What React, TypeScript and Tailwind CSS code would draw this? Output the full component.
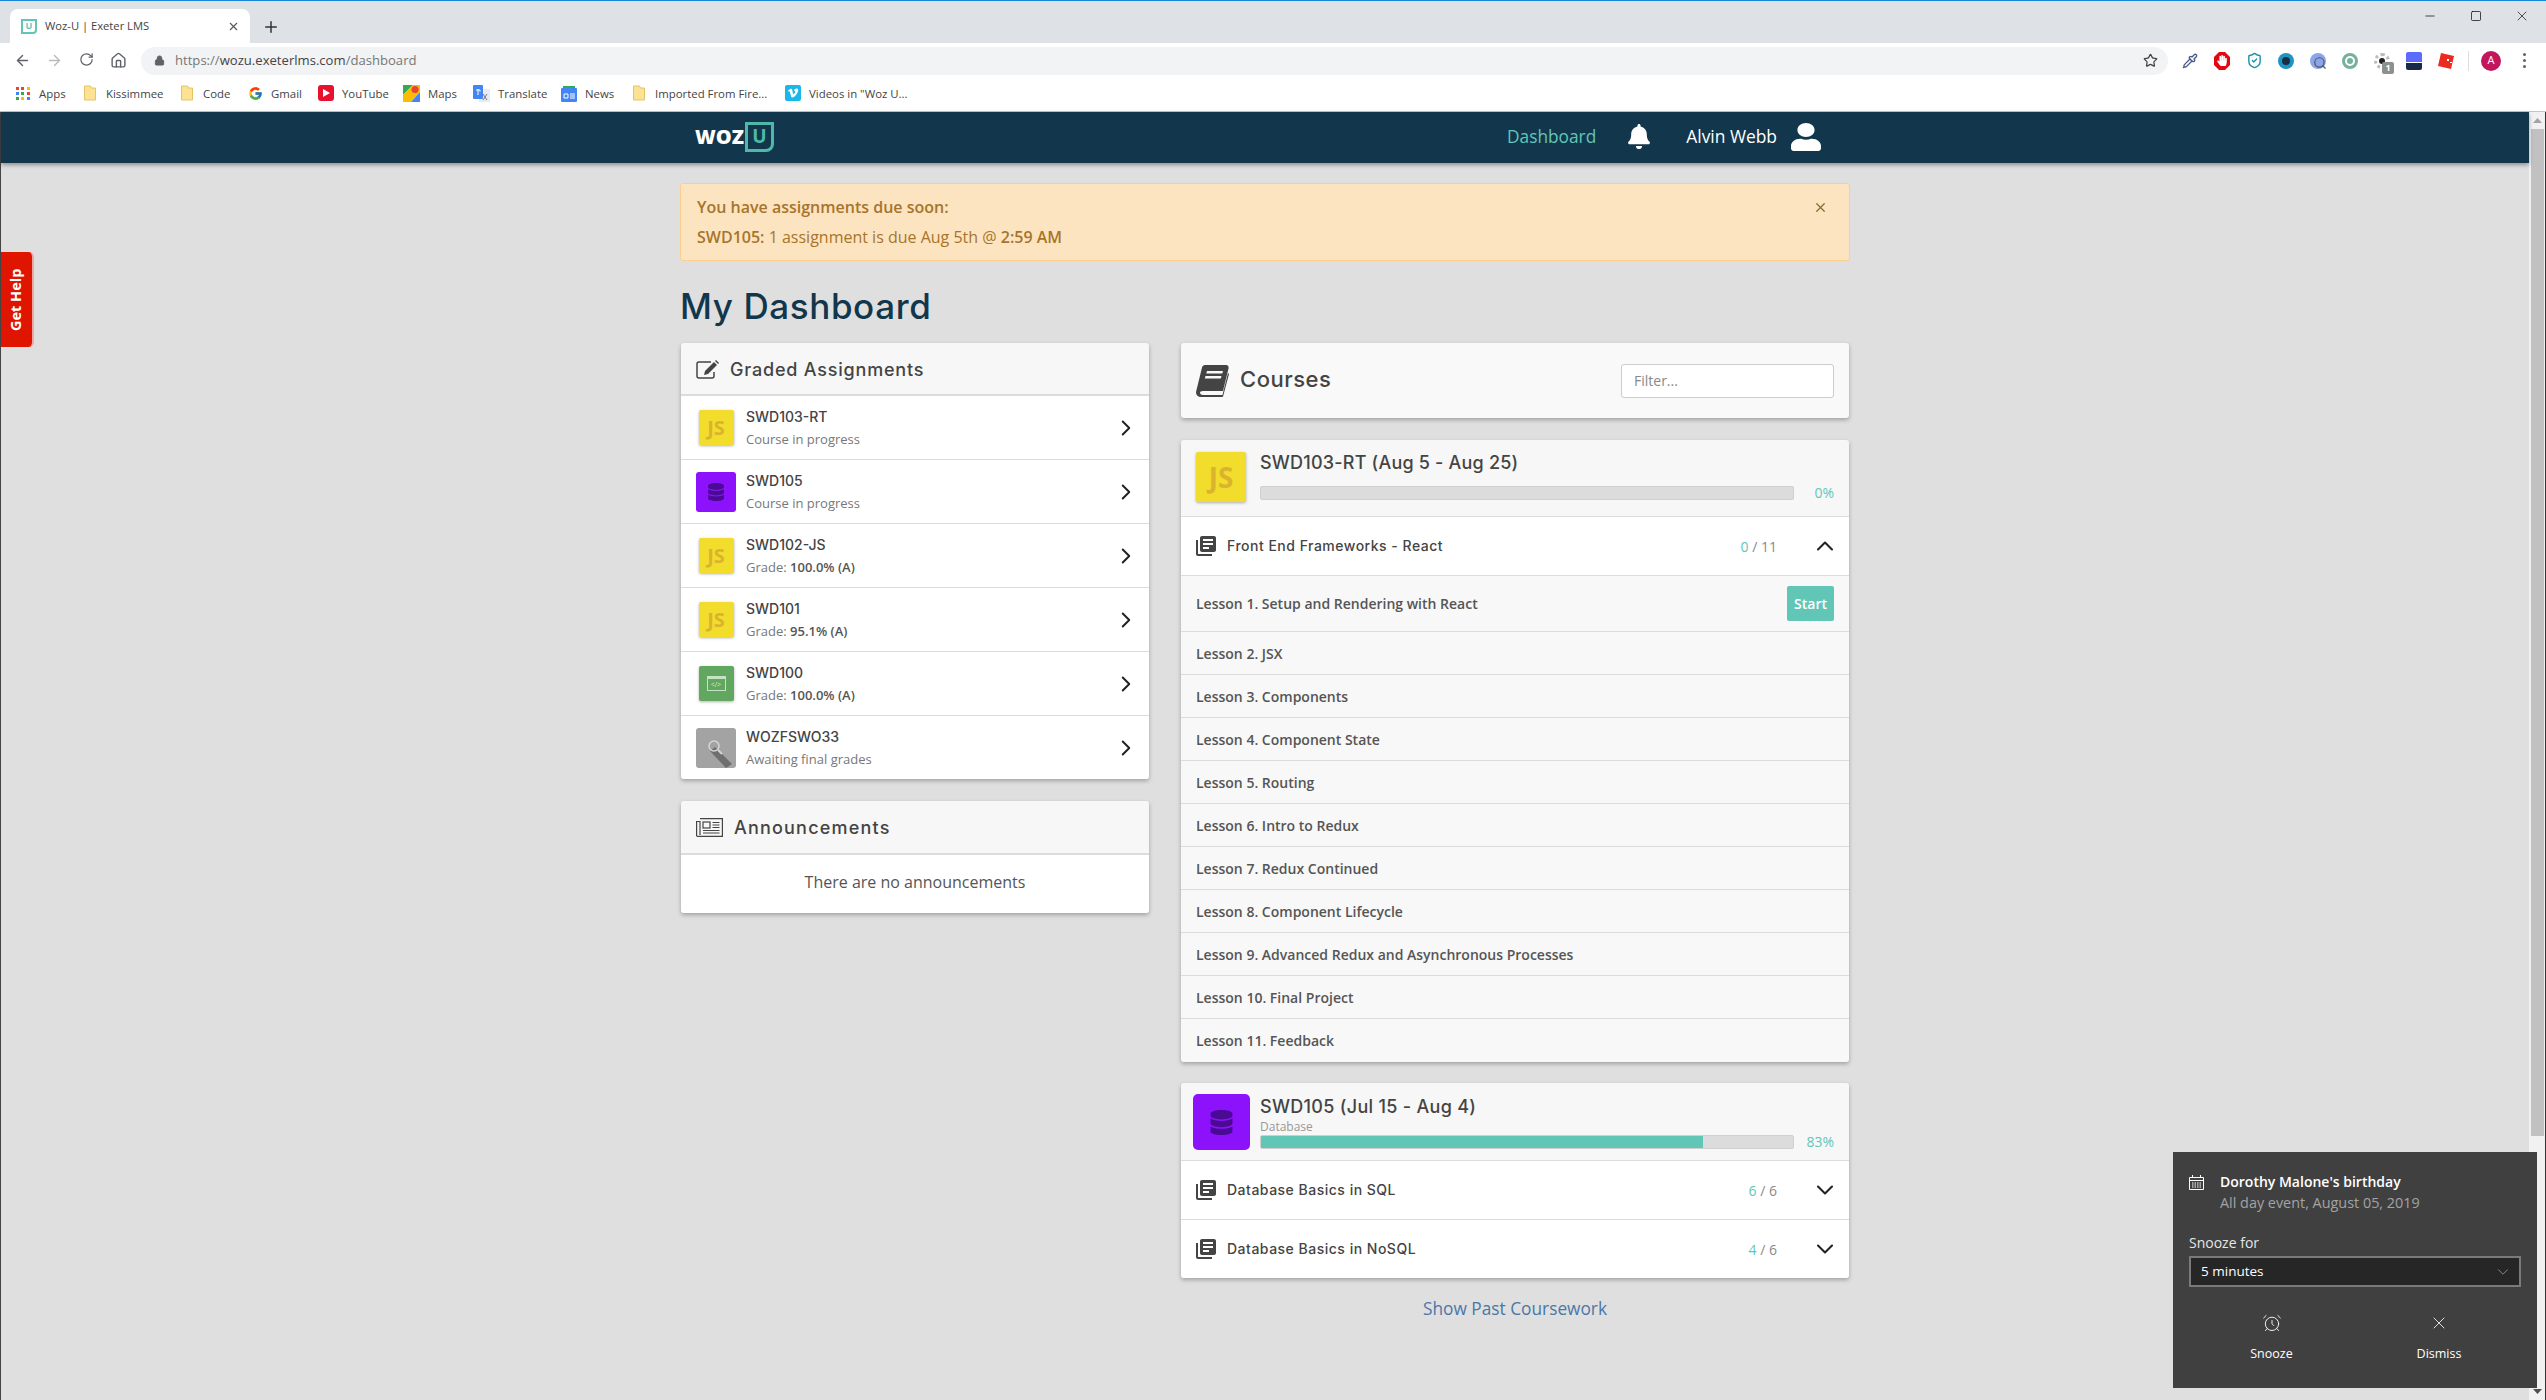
import React from 'react';
import { ArrowLeft, ArrowRight, RotateCw, Home, Star, ChevronRight, ChevronUp, ChevronDown, X, Plus, Minus, Square, Lock, AlarmClock, Pipette, ShieldCheck, Search } from 'lucide-react';
import { FaBell, FaUser, FaDatabase, FaVimeoV, FaHandPaper } from 'react-icons/fa';
import { FcGoogle } from 'react-icons/fc';
import { MdLibraryBooks } from 'react-icons/md';

const sans = 'font-["Open_Sans",sans-serif]';
const head = 'font-["Inter",sans-serif]';
const cardShadow = 'shadow-[0_2px_4px_rgba(0,0,0,0.28)]';

// --- browser chrome bits ---

const Folder = () => (
  <svg width="12" height="16" viewBox="0 0 12 16"><path d="M.5 1h6l1 2h4v12H.5z" fill="#fde293" stroke="#e6c368" /></svg>
);

const AppsGrid = () => (
  <div className="grid grid-cols-3 gap-[2px] w-[14px]">
    {['bg-[#ea4335]', 'bg-[#ea4335]', 'bg-[#fbbc05]', 'bg-[#4285f4]', 'bg-[#34a853]', 'bg-[#ea4335]', 'bg-[#34a853]', 'bg-[#fbbc05]', 'bg-[#4285f4]'].map((c, i) => (
      <span key={i} className={`w-[3px] h-[3px] ${c}`} />
    ))}
  </div>
);

const YouTubeIcon = () => (
  <span className="w-4 h-4 rounded-[3px] bg-[#e8112d] flex items-center justify-center">
    <svg width="7" height="8" viewBox="0 0 7 8"><path d="M0 0l7 4-7 4z" fill="#fff" /></svg>
  </span>
);

const MapsIcon = () => (
  <svg width="17" height="17" viewBox="0 0 17 17">
    <path d="M0 0h10L0 10z" fill="#34a853" />
    <path d="M10 0h7v7L8 17H0v-7z" fill="#fbbc05" />
    <path d="M17 7v10H8z" fill="#4285f4" />
    <circle cx="12" cy="4.5" r="3.5" fill="#ea4335" />
  </svg>
);

const TranslateIcon = () => (
  <svg width="17" height="17" viewBox="0 0 17 17">
    <rect x="6" y="4" width="11" height="13" fill="#e8eaf6" />
    <rect width="10" height="14" rx="1" fill="#4285f4" />
    <path d="M3 5h4v1.5M5 4v6" stroke="#fff" fill="none" />
    <path d="M10 9l4 6M14 9l-4 6" stroke="#777" />
  </svg>
);

const NewsIcon = () => (
  <svg width="16" height="17" viewBox="0 0 16 17">
    <rect y="3" width="16" height="14" rx="1" fill="#4285f4" />
    <path d="M2 3V1h12v2" fill="#34a853" />
    <path d="M3 9h4v4H3zM9 9h5M9 11h5M9 13h5" stroke="#fff" fill="none" />
  </svg>
);

const VimeoIcon = () => (
  <span className="w-4 h-4 rounded-[2px] bg-[#1ab7ea] flex items-center justify-center">
    <FaVimeoV className="w-3 h-3 text-white" />
  </span>
);

const bookmarks = [
  { icon: <AppsGrid />, label: 'Apps', w: 'w-[68px]', ml: 'ml-4', text: 'ml-[9px]' },
  { icon: <Folder />, label: 'Kissimmee', w: 'w-[97px]', ml: '', text: 'ml-[10px]' },
  { icon: <Folder />, label: 'Code', w: 'w-[67px]', ml: '', text: 'ml-[10px]' },
  { icon: <FcGoogle className="w-[15px] h-[15px]" />, label: 'Gmail', w: 'w-[70px]', ml: '', text: 'ml-2' },
  { icon: <YouTubeIcon />, label: 'YouTube', w: 'w-[85px]', ml: '', text: 'ml-2' },
  { icon: <MapsIcon />, label: 'Maps', w: 'w-[70px]', ml: '', text: 'ml-2' },
  { icon: <TranslateIcon />, label: 'Translate', w: 'w-[88px]', ml: '', text: 'ml-2' },
  { icon: <NewsIcon />, label: 'News', w: 'w-[72px]', ml: '', text: 'ml-2' },
  { icon: <Folder />, label: 'Imported From Fire...', w: 'w-[152px]', ml: '', text: 'ml-[10px]' },
  { icon: <VimeoIcon />, label: 'Videos in "Woz U...', w: 'w-[130px]', ml: '', text: 'ml-2' },
];

const extensions = [
  <Pipette key="a" className="w-4 h-4 text-[#4a5a8a]" />,
  <span key="b" className="relative w-4 h-[18px] flex items-center justify-center">
    <svg className="absolute inset-0" width="16" height="18" viewBox="0 0 16 18"><path d="M5 0h6l5 5v8l-5 5H5l-5-5V5z" fill="#e30613" /></svg>
    <FaHandPaper className="relative w-[10px] h-[11px] text-white" />
  </span>,
  <ShieldCheck key="c" className="w-[17px] h-[17px] text-[#1c93ab]" />,
  <span key="d" className="w-4 h-4 rounded-full bg-[#1e93c4] flex items-center justify-center"><span className="w-2 h-2 rounded-full bg-[#16303f]" /></span>,
  <span key="e" className="relative w-4 h-4 rounded-full bg-[#8aa4ee]"><Search className="absolute left-[3px] top-[3px] w-[14px] h-[14px] text-[#555]" /></span>,
  <span key="f" className="w-4 h-4 rounded-full border-[3px] border-[#74b29b] flex items-center justify-center"><span className="w-[6px] h-[6px] rounded-full bg-[#74b29b]" /></span>,
  <span key="g" className="relative w-4 h-4 rounded-full border-[3px] border-dotted border-[#bbb] flex items-center justify-center">
    <span className="w-[6px] h-[6px] rounded-full bg-[#222]" />
    <span className={`absolute left-[5px] top-[6px] w-3 h-3 rounded-[2px] bg-[#8f8f8f] text-white text-[9px] leading-3 text-center font-bold ${sans}`}>1</span>
  </span>,
  <span key="h" className="w-4 h-[18px] rounded-[2px] overflow-hidden flex flex-col"><span className="h-[10px] bg-[#5d6bfa]" /><span className="h-px bg-white" /><span className="flex-1 bg-[#1b2a4a]" /></span>,
  <svg key="i" width="16" height="16" viewBox="0 0 16 16"><path d="M3 0l13 3-3 13L0 13z" fill="#ec2b20" /><path d="M9 6h2v2H9zM12 9h2v1h-2z" fill="#fff" /></svg>,
];

const ChromeBar = () => (
  <div className="shrink-0">
    <div className="h-px bg-[#1a86d6]" />
    <div className="h-[42px] bg-[#dee1e6] flex">
      <div className="ml-[10px] mt-2 w-[240px] h-[34px] bg-white rounded-t-lg flex items-center">
        <span className={`ml-[11px] w-4 h-[15px] border-2 border-[#62c6b7] rounded-br-sm flex items-center justify-center text-[9px] font-bold text-[#62c6b7] ${sans}`}>U</span>
        <span className={`ml-2 text-[11.2px] text-[#444] ${sans}`}>Woz-U | Exeter LMS</span>
        <X className="ml-auto mr-[10px] w-[13px] h-[13px] text-[#555]" />
      </div>
      <Plus className="ml-3 mt-[17px] w-[18px] h-[18px] text-[#333]" />
      <div className="ml-auto flex h-[30px]">
        <span className="w-[46px] flex items-center justify-center"><Minus className="w-[14px] h-[14px] text-black" strokeWidth={1.2} /></span>
        <span className="w-[46px] flex items-center justify-center"><Square className="w-[12px] h-[12px] text-black" strokeWidth={1.4} /></span>
        <span className="w-[46px] flex items-center justify-center"><X className="w-4 h-4 text-black" strokeWidth={1} /></span>
        <span className="w-[1px]" />
      </div>
    </div>
    <div className="h-[35px] bg-white flex items-center">
      <div className="ml-[6px] flex">
        <span className="w-8 flex justify-center"><ArrowLeft className="w-[17px] h-[17px] text-[#5f6368]" /></span>
        <span className="w-8 flex justify-center"><ArrowRight className="w-[17px] h-[17px] text-[#bbb]" /></span>
        <span className="w-8 flex justify-center"><RotateCw className="w-[15px] h-[15px] text-[#5f6368]" /></span>
        <span className="w-8 flex justify-center"><Home className="w-[17px] h-[17px] text-[#5f6368]" /></span>
      </div>
      <div className="ml-[7px] w-[2027px] h-7 rounded-full bg-[#f1f3f4] flex items-center">
        <Lock className="ml-[13px] w-[11px] h-[11px] text-[#5f6368]" fill="#5f6368" />
        <span className={`ml-[10px] text-[13.1px] text-[#777] ${sans}`}>
          https://<span className="text-[#444]">wozu.exeterlms.com</span>/dashboard
        </span>
        <Star className="ml-auto mr-[10px] w-[15px] h-[15px] text-[#444]" />
      </div>
      <div className="ml-[6px] flex items-center">
        {extensions.map((e, i) => (
          <span key={i} className="w-8 flex justify-center items-center">{e}</span>
        ))}
        <span className="ml-[6px] w-px h-5 bg-[#ddd]" />
        <span className={`ml-[12px] w-5 h-5 rounded-full bg-[#c2185b] text-white text-[11px] flex items-center justify-center ${sans}`}>A</span>
        <span className="ml-[22px] flex flex-col gap-[3px]">
          <span className="w-[3px] h-[3px] rounded-full bg-[#5f6368]" />
          <span className="w-[3px] h-[3px] rounded-full bg-[#5f6368]" />
          <span className="w-[3px] h-[3px] rounded-full bg-[#5f6368]" />
        </span>
      </div>
    </div>
    <div className="h-[34px] pb-[2px] bg-white border-b border-[#c4c4c4] flex items-center">
      {bookmarks.map((b) => (
        <div key={b.label} className={`flex items-center ${b.w} ${b.ml}`}>
          {b.icon}
          <span className={`whitespace-nowrap text-[11.4px] text-[#444] ${b.text} ${sans}`}>{b.label}</span>
        </div>
      ))}
    </div>
  </div>
);

// --- card header drawings ---

const EditIcon = () => (
  <svg width="24" height="19" viewBox="0 0 24 19" fill="none">
    <path d="M15 2H3a2 2 0 0 0-2 2v12a2 2 0 0 0 2 2h13a2 2 0 0 0 2-2v-4" stroke="#444" strokeWidth="1.5" />
    <path d="M9 11l9-9 3 3-9 9-4 1z" fill="#444" />
    <path d="M19 1l1-1 3 3-1 1z" fill="#444" />
  </svg>
);

const NewspaperIcon = () => (
  <svg width="27" height="19" viewBox="0 0 27 19" fill="none" stroke="#444" strokeWidth="1.2">
    <path d="M4 .6h22.4v17.8H1.6A1 1 0 0 1 .6 17.4V3.5H4V17" />
    <rect x="7" y="4" width="7" height="6" />
    <path d="M16.5 4.5h7M16.5 7h7M16.5 9.5h7M7 12.5h16.5M7 15h16.5" />
  </svg>
);

const BookIcon = () => (
  <svg width="33" height="32" viewBox="0 0 33 32" fill="#444">
    <path d="M9 0h21c2 0 3 1.5 2.500 3.500L27 26H7c-2 0-3 .8-3 1.800S5 30 7 30h19.500l5.500-22 1 1-5.800 22c-.2.700-.8 1-1.500 1H5c-3 0-5-2-5-4.500 0-.8.200-1.500.500-2.500L6 2.500C6.400 1 7.500 0 9 0z" />
    <path d="M11 6h16l-.7 2.500h-16zM9.500 11h16l-.7 2.500h-16z" fill="#f9f9f9" />
  </svg>
);

// --- course tiles ---

const JsTile = ({ big }: { big?: boolean }) => (
  <div className={`shrink-0 bg-[#f2dc2c] flex items-center justify-center font-bold text-[#dab42c] shadow-[0_1px_3px_rgba(0,0,0,0.3)] ${sans} ${big ? 'w-[50px] h-[50px] text-[28px] rounded-[2px]' : 'w-[35px] h-[35px] text-[20px] rounded-[2px]'}`}>
    JS
  </div>
);

const DbTile = ({ big }: { big?: boolean }) => (
  <div className={`shrink-0 bg-[#8b12fb] rounded-[3px] flex items-center justify-center ${big ? 'w-[57px] h-[56px] rounded-[5px]' : 'w-10 h-10'}`}>
    <FaDatabase className={`text-[#4a0a94] ${big ? 'w-[23px] h-[25px]' : 'w-4 h-[18px]'}`} />
  </div>
);

const CodeTile = () => (
  <div className="shrink-0 w-[35px] h-[35px] rounded-[2px] bg-[#62a75f] shadow-[0_1px_3px_rgba(0,0,0,0.3)] flex items-center justify-center">
    <div className={`w-[19px] h-[15px] border border-[#c6e2c4] border-t-[3px] flex items-center justify-center text-[7px] leading-none text-[#d5ebd3] ${sans}`}>&lt;/&gt;</div>
  </div>
);

const SearchTile = () => (
  <div className="shrink-0 w-10 h-10 rounded-[3px] bg-[#a3a3a3] overflow-hidden flex items-center justify-center">
    <svg width="40" height="40" viewBox="0 0 40 40" fill="none">
      <path d="M19 19L36 36l-6 4-16-17z" fill="#6f6f6f" />
      <circle cx="18" cy="18" r="5" stroke="#d5d5d5" strokeWidth="1.5" />
      <path d="M22 22l4 4" stroke="#d5d5d5" strokeWidth="2" />
    </svg>
  </div>
);

const assignments = [
  { name: 'SWD103-RT', tile: <JsTile />, sub: 'Course in progress' },
  { name: 'SWD105', tile: <DbTile />, sub: 'Course in progress' },
  { name: 'SWD102-JS', tile: <JsTile />, grade: '100.0% (A)' },
  { name: 'SWD101', tile: <JsTile />, grade: '95.1% (A)' },
  { name: 'SWD100', tile: <CodeTile />, grade: '100.0% (A)' },
  { name: 'WOZFSWO33', tile: <SearchTile />, sub: 'Awaiting final grades' },
];

const lessons = [
  'Lesson 2. JSX',
  'Lesson 3. Components',
  'Lesson 4. Component State',
  'Lesson 5. Routing',
  'Lesson 6. Intro to Redux',
  'Lesson 7. Redux Continued',
  'Lesson 8. Component Lifecycle',
  'Lesson 9. Advanced Redux and Asynchronous Processes',
  'Lesson 10. Final Project',
  'Lesson 11. Feedback',
];

const ProgressBar = ({ pct }: { pct: number }) => (
  <div className="w-[534px] h-[14px] rounded-[2px] bg-[#dcdcdc] border border-[#cfcfcf] overflow-hidden">
    <div className="h-full bg-[#62c6b7]" style={{ width: `${pct}%` }} />
  </div>
);

const SectionRow = ({ title, done, total, open, last }: { title: string; done: number; total: number; open?: boolean; last?: boolean }) => (
  <div className={`bg-white flex items-center pl-[15px] pr-[10px] ${last ? 'h-[58px]' : 'h-[59px] border-b border-[#dcdcdc]'}`}>
    <MdLibraryBooks className="w-6 h-6 -ml-[2px] text-[#444]" />
    <span className={`ml-[9px] mb-[2px] text-[14px] tracking-[0.5px] font-medium text-[#444] ${head}`}>{title}</span>
    <span className={`ml-auto text-[14px] text-[#8a8a8a] ${sans}`}>
      <span className="text-[#62c6b7]">{done}</span> / {total}
    </span>
    {open ? (
      <ChevronUp className="ml-[34px] w-[28px] h-[28px] text-[#222]" strokeWidth={1.8} />
    ) : (
      <ChevronDown className="ml-[34px] w-[28px] h-[28px] text-[#222]" strokeWidth={1.8} />
    )}
  </div>
);

// --- page ---

const Nav = () => (
  <div className="relative h-[51px] bg-[#12374c] shadow-[0_2px_4px_rgba(0,0,0,0.35)]">
    <div className="w-[1170px] mx-auto h-full flex items-center pb-[2px] pr-[29px]">
      <span className={`ml-[15px] text-[20px] leading-none font-extrabold text-white ${sans}`}>WOZ</span>
      <span className={`ml-[1px] w-[29px] h-[30px] border-[3px] border-[#4fb9a9] rounded-br-[8px] flex items-center justify-center text-[19px] leading-none font-bold text-[#4fb9a9] ${sans}`}>U</span>
      <span className={`ml-auto text-[17.3px] text-[#62c6b7] ${sans}`}>Dashboard</span>
      <FaBell className="ml-[32px] w-[22px] h-[25px] text-white" />
      <span className={`ml-[36px] text-[17.4px] text-white ${sans}`}>Alvin Webb</span>
      <FaUser className="ml-[14px] w-[30px] h-[28px] text-white" preserveAspectRatio="none" />
    </div>
  </div>
);

const Alert = () => (
  <div className={`mt-5 h-[78px] rounded-[3px] bg-[#fce4c0] border border-[#fbd08e] pl-4 pr-4 text-[16px] text-[#a7742c] relative flex flex-col justify-center gap-[9px] ${sans}`}>
    <div className="font-semibold leading-[21px]">You have assignments due soon:</div>
    <div className="leading-[21px]"><span className="font-semibold">SWD105:</span> 1 assignment is due Aug 5th @ <span className="font-semibold">2:59 AM</span></div>
    <X className="absolute right-[21px] top-[16px] w-[15px] h-[15px] text-[#8a6a30]" />
  </div>
);

const AssignmentsCard = () => (
  <div className={`rounded-[3px] overflow-hidden ${cardShadow}`}>
    <div className="h-[53px] pt-[1px] bg-[#f7f7f7] border-b-2 border-[#dcdcdc] flex items-center pl-[15px]">
      <EditIcon />
      <span className={`ml-[10px] text-[18px] tracking-[0.8px] font-medium text-[#444] ${head}`}>Graded Assignments</span>
    </div>
    {assignments.map((a, i) => (
      <div key={a.name} className={`bg-white flex items-center ${i < assignments.length - 1 ? 'h-16 border-b border-[#dcdcdc]' : 'h-[63px]'}`}>
        <div className="w-[65px] flex justify-center pl-[5px]">{a.tile}</div>
        <div>
          <div className={`text-[14px] leading-[18px] font-medium text-[#444] ${head}`}>{a.name}</div>
          <div className={`mt-1 text-[13px] leading-[18px] text-[#777] ${sans}`}>
            {a.sub ?? (
              <>
                Grade: <span className="font-semibold text-[#555]">{a.grade}</span>
              </>
            )}
          </div>
        </div>
        <ChevronRight className="ml-auto mr-[10px] w-[26px] h-[26px] text-[#222]" strokeWidth={1.8} />
      </div>
    ))}
  </div>
);

const AnnouncementsCard = () => (
  <div className={`mt-[22px] rounded-[3px] overflow-hidden ${cardShadow}`}>
    <div className="h-[54px] bg-[#f7f7f7] border-b-2 border-[#dcdcdc] flex items-center pl-[15px]">
      <NewspaperIcon />
      <span className={`ml-[11px] text-[18px] tracking-[1.2px] font-medium text-[#444] ${head}`}>Announcements</span>
    </div>
    <div className={`h-[58px] pb-1 bg-white flex items-center justify-center text-[16px] text-[#555] ${sans}`}>
      There are no announcements
    </div>
  </div>
);

const CoursesHeader = () => (
  <div className={`h-[75px] rounded-[3px] bg-[#f9f9f9] flex items-center pl-[15px] pr-[15px] ${cardShadow}`}>
    <BookIcon />
    <span className={`ml-[11px] mb-[2px] text-[22px] tracking-[0.5px] font-medium text-[#444] ${head}`}>Courses</span>
    <div className={`ml-auto w-[213px] h-[34px] bg-white border border-[#ccc] rounded-[3px] pl-3 flex items-center text-[14px] text-[#888] ${sans}`}>Filter...</div>
  </div>
);

const CourseReact = () => (
  <div className={`mt-[22px] rounded-[3px] overflow-hidden ${cardShadow}`}>
    <div className="h-[77px] bg-[#f7f7f7] border-b border-[#dcdcdc] flex pl-[15px] pr-[15px] pt-3">
      <JsTile big />
      <div className="ml-[14px] flex-1">
        <div className={`text-[18px] leading-[22px] tracking-[0.2px] font-medium text-[#444] ${head}`}>SWD103-RT (Aug 5 - Aug 25)</div>
        <div className="mt-3 flex items-center justify-between">
          <ProgressBar pct={0} />
          <span className={`text-[14px] leading-[14px] text-[#62c6b7] ${sans}`}>0%</span>
        </div>
      </div>
    </div>
    <SectionRow title="Front End Frameworks - React" done={0} total={11} open />
    <div className="h-[56px] bg-[#f8f8f8] border-b border-[#dcdcdc] flex items-center pl-[15px] pr-[15px]">
      <span className={`text-[14px] font-semibold text-[#555] ${sans}`}>Lesson 1. Setup and Rendering with React</span>
      <span className={`ml-auto w-[47px] h-[35px] rounded-[2px] bg-[#62c6b7] text-white text-[14px] font-semibold flex items-center justify-center ${sans}`}>Start</span>
    </div>
    {lessons.map((l, i) => (
      <div key={l} className={`h-[43px] bg-[#f8f8f8] flex items-center pl-[15px] text-[14px] font-semibold text-[#555] ${sans} ${i < lessons.length - 1 ? 'border-b border-[#dcdcdc]' : ''}`}>
        {l}
      </div>
    ))}
  </div>
);

const CourseDb = () => (
  <div className={`mt-[21px] rounded-[3px] overflow-hidden ${cardShadow}`}>
    <div className="h-[78px] bg-[#f7f7f7] border-b border-[#dcdcdc] flex pl-3 pr-[15px] pt-[11px]">
      <DbTile big />
      <div className="ml-[10px] flex-1">
        <div className={`pt-[2px] text-[18px] leading-[22px] tracking-[0.3px] font-medium text-[#444] ${head}`}>SWD105 (Jul 15 - Aug 4)</div>
        <div className={`text-[12px] leading-[15px] mt-[1px] text-[#999] ${sans}`}>Database</div>
        <div className="mt-[1px] flex items-center justify-between">
          <ProgressBar pct={83} />
          <span className={`text-[14px] leading-[14px] text-[#62c6b7] ${sans}`}>83%</span>
        </div>
      </div>
    </div>
    <SectionRow title="Database Basics in SQL" done={6} total={6} />
    <SectionRow title="Database Basics in NoSQL" done={4} total={6} last />
  </div>
);

const HelpTab = () => (
  <div className="absolute left-px top-[252px] w-[33px] h-[95px] bg-[#e01500] rounded-r-[5px] border-r-2 border-[#f0a8a0] flex items-center justify-center">
    <span className={`-rotate-90 whitespace-nowrap text-[14.5px] font-bold text-white ${sans}`}>Get Help</span>
  </div>
);

const Toast = () => (
  <div className={`absolute left-[2173px] top-[1152px] w-[364px] h-[236px] bg-[#404040] pl-4 pr-4 pt-5 ${sans}`}>
    <div className="flex">
      <svg className="mt-[3px] shrink-0" width="15" height="15" viewBox="0 0 15 15" fill="none" stroke="#fff">
        <path d="M.5 2.500h14v12H.5zM.5 5.500h14M3.500 0v3M11.500 0v3" />
        <path d="M3 8h9M3 10h9M3 12h9" strokeDasharray="1.500 1" />
      </svg>
      <div className="ml-4">
        <div className="text-[14px] leading-5 font-semibold text-white">Dorothy Malone's birthday</div>
        <div className="text-[14.4px] leading-[21px] text-[#a3a3a3]">All day event, August 05, 2019</div>
      </div>
    </div>
    <div className="mt-[20px] text-[14px] leading-5 text-[#e6e6e6]">Snooze for</div>
    <div className="mt-[3px] w-[332px] h-[31px] bg-[#262626] border-2 border-[#7a7a7a] flex items-center pl-[10px] pr-[7px] text-[13.5px] text-white">
      5 minutes
      <ChevronDown className="ml-auto w-[18px] h-[18px] text-[#aaa]" strokeWidth={1} />
    </div>
    <div className="mt-[26px] flex text-[12.5px] text-white">
      <div className="w-[167px] flex flex-col items-center">
        <AlarmClock className="w-5 h-5" strokeWidth={1.1} />
        <span className="mt-[12px] ml-[-1px]">Snooze</span>
      </div>
      <div className="w-[167px] flex flex-col items-center pl-[2px]">
        <X className="w-5 h-5" strokeWidth={1} />
        <span className="mt-[12px]">Dismiss</span>
      </div>
    </div>
  </div>
);

const Scrollbar = () => (
  <div className="w-[17px] shrink-0 bg-[#f1f1f1] border-r border-[#333] pl-[2px] flex flex-col items-start">
    <div className="h-[17px] w-[13px] flex items-center justify-center">
      <svg width="9" height="5" viewBox="0 0 9 5"><path d="M4.500 0L9 5H0z" fill="#a3a3a3" /></svg>
    </div>
    <div className="w-[13px] h-[1007px] bg-[#c1c1c1]" />
    <div className="mt-auto h-[17px] w-[13px] flex items-center justify-center">
      <svg width="9" height="5" viewBox="0 0 9 5"><path d="M0 0h9L4.500 5z" fill="#505050" /></svg>
    </div>
  </div>
);

const App: React.FC = () => {
  return (
    <div className="relative w-[2546px] h-[1400px] overflow-hidden bg-[#dfdfdf] flex flex-col">
      <ChromeBar />
      <div className="flex-1 flex min-h-0 border-l border-[#444]">
        <div className="flex-1 min-w-0">
          <Nav />
          <div className="w-[1170px] mx-auto">
            <Alert />
            <div className={`h-[82px] pt-2 flex items-center text-[35px] tracking-[0.6px] font-medium text-[#12374c] ${head}`}>My Dashboard</div>
            <div className="flex">
              <div className="ml-px w-[468px]">
                <AssignmentsCard />
                <AnnouncementsCard />
              </div>
              <div className="ml-8 w-[668px]">
                <CoursesHeader />
                <CourseReact />
                <CourseDb />
                <div className={`mt-5 text-center text-[17.3px] leading-[22px] text-[#4a77a8] ${sans}`}>Show Past Coursework</div>
              </div>
            </div>
          </div>
        </div>
        <Scrollbar />
      </div>
      <HelpTab />
      <Toast />
    </div>
  );
};

export default App;
